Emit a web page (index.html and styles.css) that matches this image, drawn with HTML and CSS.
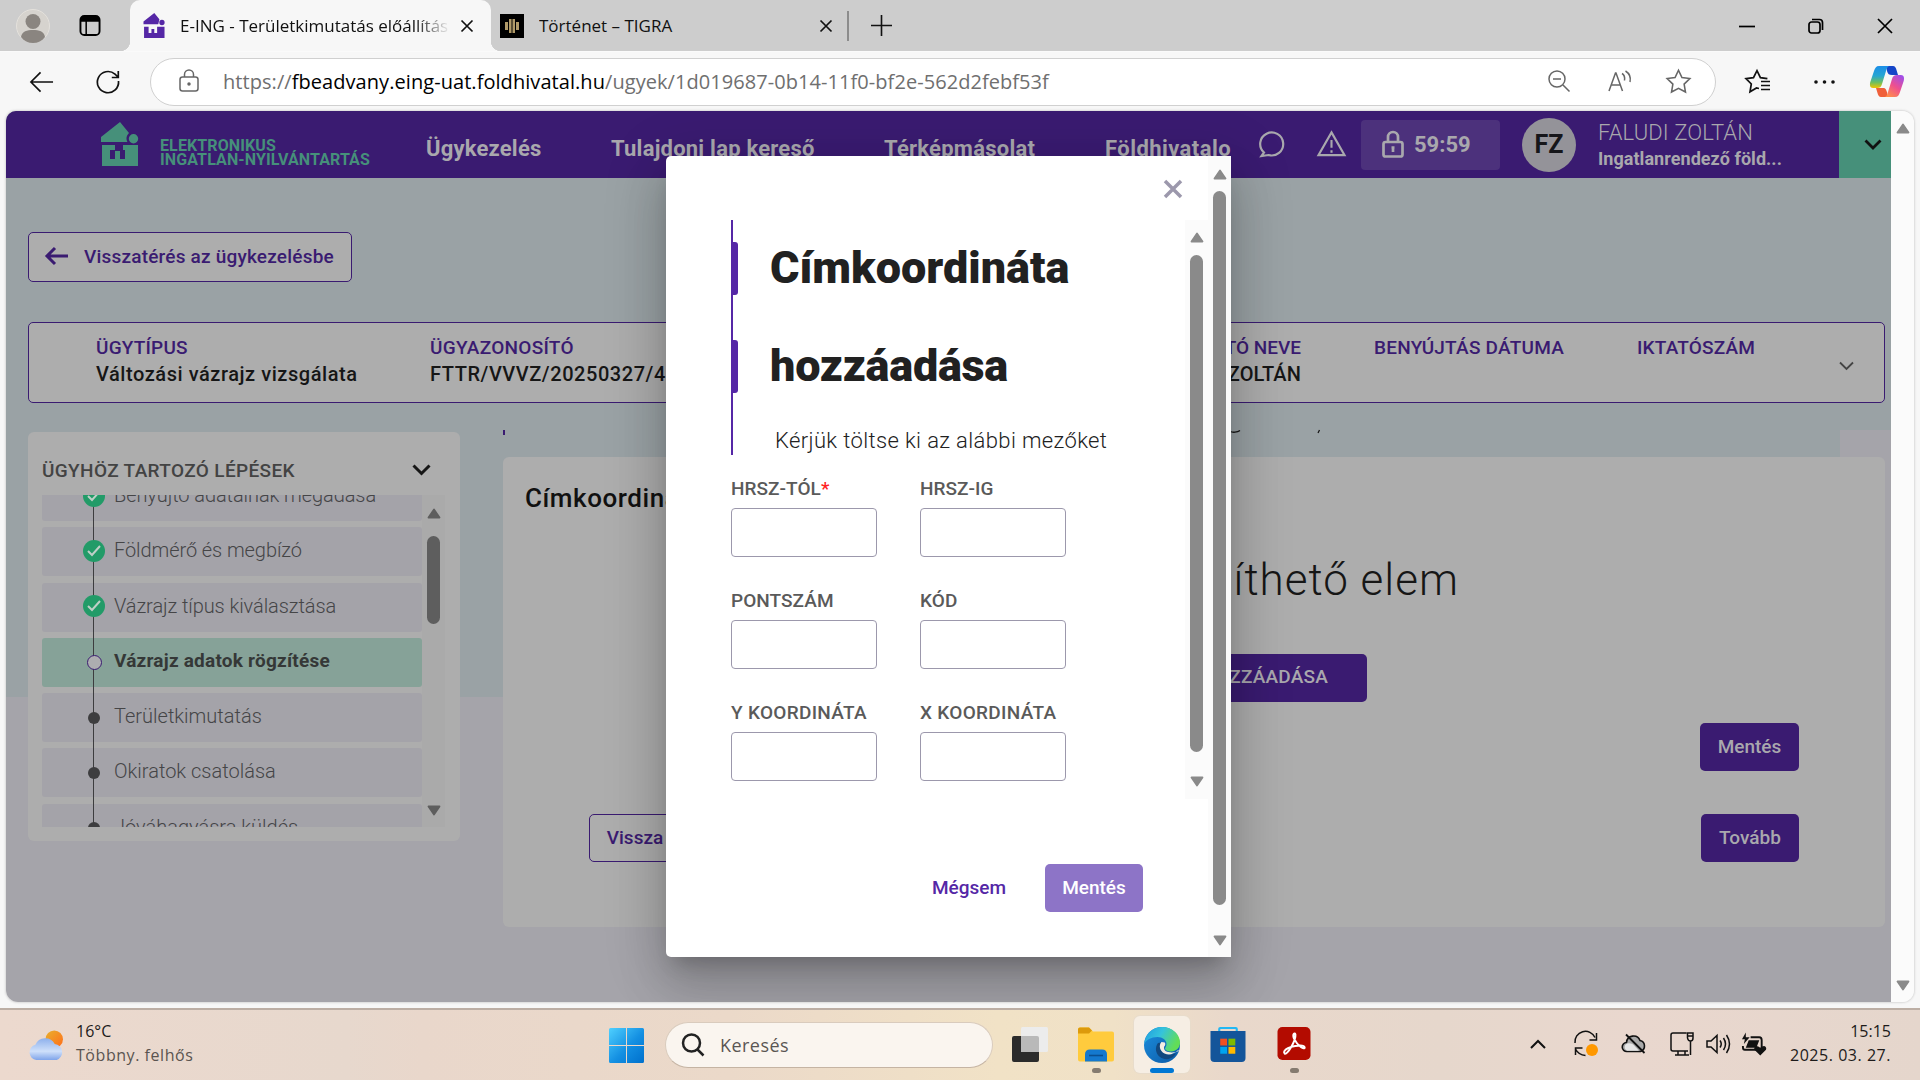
FILE: index.html
```html
<!DOCTYPE html>
<html lang="hu">
<head>
<meta charset="utf-8">
<title>E-ING - Területkimutatás előállítása</title>
<link rel="stylesheet" href="styles.css">
</head>
<body>
<div class="tabs">
  <svg class="profile" viewBox="0 0 34 34"><circle cx="17" cy="17" r="16.500" fill="#d6d3ce" stroke="#e4e1dc"/><circle cx="17" cy="12.500" r="7.500" fill="#8a8580"/><path d="M5 28c1-6 6-7 12-7s11 1 12 7c-3 4-7 6-12 6s-9-2-12-6z" fill="#8a8580"/></svg>
  <svg class="tabmenu" viewBox="0 0 22 22"><rect x="1" y="1" width="20" height="20" rx="4" fill="none" stroke="#000" stroke-width="2"/><path d="M1 5a4 4 0 0 1 4-4h12a4 4 0 0 1 4 4v2H1z"/><path d="M7 6v15" stroke="#000" stroke-width="1.600"/></svg>
  <div class="tab tab-active">
    <svg class="fav" viewBox="0 0 37 44"><path d="M19 0l9 11-2 9H0v-5zM1 24h8v11h5v-7h5v7h5V24h13v20H1zM32.500 12a4.700 4.700 0 1 1 0 9.400 4.700 4.700 0 0 1 0-9.400z" fill="#5527a6"/></svg>
    <span class="tab-title">E-ING - Területkimutatás előállítása</span>
    <svg class="x" viewBox="0 0 12 12"><path d="M.5.500l11 11M11.500.500l-11 11"/></svg>
  </div>
  <div class="tab">
    <svg class="fav" viewBox="0 0 24 24"><path d="M0 0h24v24H0z"/><path d="M5 8h3v8H5zM9 5h2.500v14H9zM12.500 5H15v14h-2.500zM16 8h3v8h-3z" fill="#b09a68"/></svg>
    <span class="tab-title">Történet – TIGRA</span>
    <svg class="x" viewBox="0 0 12 12"><path d="M.5.500l11 11M11.500.500l-11 11"/></svg>
  </div>
  <i class="tabsep"></i>
  <svg class="plus" viewBox="0 0 22 22"><path d="M11 0v22M0 11h22"/></svg>
  <div class="winbtns">
    <svg viewBox="0 0 16 16"><path d="M0 8.500h16"/></svg>
    <svg viewBox="0 0 16 16"><rect x="1" y="4" width="11" height="11" rx="2.500"/><path d="M4 1.500h7.500a3 3 0 0 1 3 3V12"/></svg>
    <svg viewBox="0 0 16 16"><path d="M1 1l14 14M15 1L1 15"/></svg>
  </div>
</div>

<div class="toolbar">
  <svg class="back" viewBox="0 0 26 22"><path d="M25 11H2M12 1L2 11l10 10"/></svg>
  <svg class="reload" viewBox="0 0 24 24"><path d="M22.500 11A10.600 10.600 0 1 1 19 4.200L22 7M22.300 1v6.500h-6.500"/></svg>
  <div class="address">
    <svg class="lock" viewBox="0 0 20 24"><rect x="1" y="8" width="18" height="14" rx="2.500"/><path d="M5.500 8V5.500a4.500 4.500 0 0 1 9 0V8"/><circle cx="10" cy="15" r="1" fill="#555"/></svg>
    <span class="url">https://<b>fbeadvany.eing-uat.foldhivatal.hu</b>/ugyek/1d019687-0b14-11f0-bf2e-562d2febf53f</span>
    <svg class="a1" viewBox="0 0 22 22"><circle cx="9" cy="9" r="8"/><path d="M15 15l6.500 6.500M5 9h8"/></svg>
    <svg class="a2" viewBox="0 0 24 22"><path d="M1 21L7.500 3h.5l6.500 18M3.500 15h9M14 3.500c2.500 1.500 3 4 2.500 7M17.500 1c4 2.500 5.500 6.500 4.500 11"/></svg>
    <svg class="a3" viewBox="0 0 24 24"><path d="M12 1.200l3.300 7 7.600 1-5.500 5.300 1.300 7.600L12 18.500l-6.700 3.600 1.300-7.600L1.100 9.200l7.600-1z"/></svg>
  </div>
  <svg class="favs" viewBox="0 0 26 24"><path d="M14 19l-2.500-.5L5 22.300l1.300-7.800L1 9.200l7.500-1L12 1.200l3.400 7 7 1M16 12h9M16 16h9M16 20h9"/></svg>
  <svg class="dots" viewBox="0 0 21 4"><circle cx="2" cy="2" r="1.800"/><circle cx="10.500" cy="2" r="1.800"/><circle cx="19" cy="2" r="1.800"/></svg>
  <svg class="copilot" viewBox="0 0 34 31">
    <defs>
      <linearGradient id="ca" x1="0" y1="0" x2="0" y2="1"><stop offset="0" stop-color="#1c8ee8"/><stop offset=".45" stop-color="#26a6d2"/><stop offset=".75" stop-color="#6fbf5f"/><stop offset="1" stop-color="#f2c400"/></linearGradient>
      <linearGradient id="cb" x1=".8" y1="0" x2=".2" y2="1"><stop offset="0" stop-color="#a04ee8"/><stop offset=".5" stop-color="#ee4f8f"/><stop offset="1" stop-color="#ff8f4a"/></linearGradient>
    </defs>
    <path d="M16 0h7c2 0 3 2 3.500 4l1.500 5h-6c-3 0-4-1-5-4z" fill="#1545c8"/>
    <path d="M18 31h-7c-2 0-3-2-3.500-4L6 22h7c3 0 3 2 4 4z" fill="#f0603a"/>
    <path d="M9 0h10c-2 1-2.500 3-3 5l-4 13c-1 3-2 4-5 4H3c-3 0-3.500-3-2.700-6L4 5c1-3 2-5 5-5z" fill="url(#ca)"/>
    <path d="M25 31H15c2-1 2.500-3 3-5l4-13c1-3 2-4 5-4h4c3 0 3.500 3 2.700 6L30 26c-1 3-2 5-5 5z" fill="url(#cb)"/>
  </svg>
</div>

<div class="frame">
 <div class="view">
  <div class="app">
    <header class="head">
      <svg class="logo" viewBox="0 0 37 44"><path d="M19 0l9 11c-3 3-3 6-1.500 9H0v-5zM1 23h13v5H9v9h5v-8h5v8h5v-9h-2v-5h15v21H1zM32.500 12a4.700 4.700 0 1 1 0 9.400 4.700 4.700 0 0 1 0-9.400z" fill="#46907a"/></svg>
      <div class="brand"><span class="b1">ELEKTRONIKUS</span><span class="b2">INGATLAN-NYILVÁNTARTÁS</span></div>
      <nav class="nav"><a class="n1">Ügykezelés</a><a class="n2">Tulajdoni lap kereső</a><a class="n3">Térképmásolat</a><a class="n4">Földhivatalo</a></nav>
      <svg class="chat" viewBox="0 0 28 28"><path d="M5 22.500A11.500 11.500 0 1 1 9.500 25L2.500 26z"/></svg>
      <svg class="warn" viewBox="0 0 30 27"><path d="M15 2L28.500 25.500h-27z"/><path d="M15 10v8M15 20.500v2.500"/></svg>
      <div class="timer"><svg viewBox="0 0 22 28"><path d="M6 12V7a5 5 0 0 1 10 0v5"/><rect x="1.500" y="12" width="19" height="14.500" rx="2"/><path d="M11 17v5M9.500 17.500h3"/></svg><span>59:59</span></div>
      <div class="avatar">FZ</div>
      <div class="user"><span class="u1">FALUDI ZOLTÁN</span><span class="u2">Ingatlanrendező föld...</span></div>
      <div class="drop"><svg viewBox="0 0 18 11"><path d="M1.500 1.500L9 9l7.500-7.500"/></svg></div>
    </header>
    <main class="content">
      <a class="return"><svg viewBox="0 0 24 18"><path d="M23 9H2.500M10 1L2 9l8 8"/></svg>Visszatérés az ügykezelésbe</a>
      <section class="case">
        <div class="c1"><h4>ÜGYTÍPUS</h4><p>Változási vázrajz vizsgálata</p></div>
        <div class="c2"><h4>ÜGYAZONOSÍTÓ</h4><p>FTTR/VVVZ/20250327/4</p></div>
        <div class="c3"><h4>BENYÚJTÓ NEVE</h4><p>FALUDI ZOLTÁN</p></div>
        <div class="c4"><h4>BENYÚJTÁS DÁTUMA</h4></div>
        <div class="c5"><h4>IKTATÓSZÁM</h4></div>
        <svg viewBox="0 0 15 10"><path d="M1 1.500L7.500 8 14 1.500"/></svg>
      </section>
      <div class="cols">
        <aside class="steps">
          <div class="steps-head"><span>ÜGYHÖZ TARTOZÓ LÉPÉSEK</span><svg viewBox="0 0 19 12"><path d="M1.500 1.500l8 8 8-8"/></svg></div>
          <div class="steps-body">
            <ul>
              <li><svg viewBox="0 0 22 22"><circle cx="11" cy="11" r="11"/><path d="M5 11l4 4 8-9"/></svg>Benyújtó adatainak megadása</li>
              <li><svg viewBox="0 0 22 22"><circle cx="11" cy="11" r="11"/><path d="M5 11l4 4 8-9"/></svg>Földmérő és megbízó</li>
              <li><svg viewBox="0 0 22 22"><circle cx="11" cy="11" r="11"/><path d="M5 11l4 4 8-9"/></svg>Vázrajz típus kiválasztása</li>
              <li class="now"><i></i>Vázrajz adatok rögzítése</li>
              <li><i></i>Területkimutatás</li>
              <li><i></i>Okiratok csatolása</li>
              <li><i></i>Jóváhagyásra küldés</li>
            </ul>
            <div class="bar bar-steps"><svg class="tri" viewBox="0 0 14 11"><path d="M7 1.500L12.500 9.500h-11z"/></svg><b></b><svg class="tri dn" viewBox="0 0 14 11"><path d="M7 1.500L12.500 9.500h-11z"/></svg></div>
          </div>
        </aside>
        <div class="maincol">
          <div class="cut"><i></i><svg class="g" viewBox="0 0 12 3"><path d="M0 1.200q2 1.300 5 1t5-1.700"/></svg><svg class="y" viewBox="0 0 3 3"><path d="M2.500 0L1 3"/></svg></div>
          <section class="panel">
            <h3>Címkoordináták</h3>
            <p class="empty">Nincs megjeleníthető elem</p>
            <div class="rowadd"><a class="btn add">HOZZÁADÁSA</a></div>
            <div class="rowsave"><a class="btn save">Mentés</a></div>
            <div class="rownav"><a class="btn prev">Vissza</a><a class="btn next">Tovább</a></div>
          </section>
        </div>
      </div>
    </main>
  </div>
  <div class="bar bar-page"><svg class="tri" viewBox="0 0 14 11"><path d="M7 1.500L12.500 9.500h-11z"/></svg><svg class="tri dn" viewBox="0 0 14 11"><path d="M7 1.500L12.500 9.500h-11z"/></svg></div>

  <div class="modal" role="dialog">
    <div class="modal-main">
      <div class="modal-top"><svg viewBox="0 0 20 20"><path d="M2 2l16 16M18 2L2 18"/></svg></div>
      <div class="modal-scroll">
        <form class="form">
          <div class="title">
            <h1><span class="t1">Címkoordináta</span><span class="t2">hozzáadása</span></h1>
            <p>Kérjük töltse ki az alábbi mezőket</p>
          </div>
          <div class="fields">
            <label><span>HRSZ-TÓL<em>*</em></span><input></label>
            <label><span>HRSZ-IG</span><input></label>
            <label><span>PONTSZÁM</span><input></label>
            <label><span>KÓD</span><input></label>
            <label><span class="w">Y KOORDINÁTA</span><input></label>
            <label><span class="w">X KOORDINÁTA</span><input></label>
          </div>
        </form>
        <div class="bar bar-form"><svg class="tri" viewBox="0 0 14 11"><path d="M7 1.500L12.500 9.500h-11z"/></svg><b></b><svg class="tri dn" viewBox="0 0 14 11"><path d="M7 1.500L12.500 9.500h-11z"/></svg></div>
      </div>
      <div class="modal-foot"><a class="cancel">Mégsem</a><a class="btn submit">Mentés</a></div>
    </div>
    <div class="bar bar-modal"><svg class="tri" viewBox="0 0 14 11"><path d="M7 1.500L12.500 9.500h-11z"/></svg><b></b><svg class="tri dn" viewBox="0 0 14 11"><path d="M7 1.500L12.500 9.500h-11z"/></svg></div>
  </div>
 </div>
</div>

<footer class="taskbar">
  <svg class="weather" viewBox="0 0 37 32"><defs><linearGradient id="su" x1="0" y1="0" x2="1" y2="1"><stop offset="0" stop-color="#e9b02c"/><stop offset="1" stop-color="#ff6d1b"/></linearGradient><linearGradient id="cl" x1="0" y1="0" x2="0" y2="1"><stop offset="0" stop-color="#8db0ec"/><stop offset=".6" stop-color="#cfe0fa"/><stop offset="1" stop-color="#7fa4ea"/></linearGradient></defs><circle cx="26.500" cy="9.500" r="9" fill="url(#su)"/><path d="M8 31a8 8 0 0 1-1-15.700A11 11 0 0 1 27 14.500 8.500 8.500 0 0 1 29 31z" fill="url(#cl)"/></svg>
  <div class="wtext"><span>16°C</span><span class="w2">Többny. felhős</span></div>
  <svg class="start" viewBox="0 0 35 35"><defs><linearGradient id="wi" x1="0" y1="0" x2="1" y2="1"><stop offset="0" stop-color="#4fd0ff"/><stop offset=".55" stop-color="#138fe2"/><stop offset="1" stop-color="#0070cc"/></linearGradient></defs><path d="M1.500 0H17v17H0V1.500A1.500 1.500 0 0 1 1.500 0zM18 0h15.500A1.500 1.500 0 0 1 35 1.500V17H18zM0 18h17v17H1.500A1.500 1.500 0 0 1 0 33.500zM18 18h17v15.500a1.500 1.500 0 0 1-1.500 1.500H18z" fill="url(#wi)"/></svg>
  <div class="search"><svg viewBox="0 0 24 24"><circle cx="10.500" cy="10" r="8.500"/><path d="M16.500 16.500l6 6"/></svg><span>Keresés</span></div>
  <svg class="taskview" viewBox="0 0 36 35"><path d="M0 11q0-2 2-2h8v16h17v8q0 2-2 2H2q-2 0-2-2z" fill="#2b2b2b"/><rect x="9" y="0" width="27" height="25" rx="1.500" fill="#ececec"/><path d="M9 9h16q2 0 2 2v14H9z" fill="#b9b9b9"/></svg>
  <div class="pin run">
    <svg viewBox="0 0 36 34"><path d="M0 2q0-2 2-2h9l4 4h19q2 0 2 2v26q0 2-2 2H2q-2 0-2-2z" fill="#ffcb3d"/><path d="M0 2q0-2 2-2h9l3 3-3 3H0z" fill="#dc9a0b"/><path d="M7 34v-7q0-5 5-5h12q5 0 5 5v7z" fill="#1479cf"/><path d="M11 28h14" stroke="#0a4f91" stroke-width="1.600"/></svg><i></i>
  </div>
  <div class="pin edge">
    <svg viewBox="0 0 36 36"><defs><linearGradient id="e1" x1="0" y1="0" x2="1" y2=".4"><stop offset="0" stop-color="#1e9be0"/><stop offset=".5" stop-color="#35c3dc"/><stop offset="1" stop-color="#62dd57"/></linearGradient><linearGradient id="e2" x1="0" y1="0" x2="1" y2="1"><stop offset="0" stop-color="#1c8fe0"/><stop offset="1" stop-color="#0c59a4"/></linearGradient></defs><circle cx="18" cy="18" r="18" fill="url(#e2)"/><path d="M.3 17C1 7 8.500 0 18 0c10.500 0 18 7.500 18 15.500 0 5.500-4 9-9 9-4 0-6-1.500-6-3 0-1 1.500-1.500 1.500-4.500 0-4-4-7-9-7C7 10 2 13 .3 17z" fill="url(#e1)"/><path d="M14 16c-3 4-3 10 2 14 4 3 10 3 14-1 2-2 2-3 1-2.500-6 2.500-15 0-15-7 0-1.500.5-3 1-4z" fill="#12487f"/><path d="M17.500 15c-3 3-2 9 3 11.500 5 2 9 .5 13-3l2.500 0C32 26 19 27 20 20c.5-1 2-2 .8-4.500z" fill="#f5ede3"/></svg><i></i>
  </div>
  <div class="pin"><svg viewBox="0 0 36 36"><path d="M9 6V2q0-1 1-1h16q1 0 1 1v4" fill="none" stroke="#22b8f4" stroke-width="2.200"/><path d="M0 4h36v28q0 4-4 4H4q-4 0-4-4z" fill="#14559a"/><path d="M10 12h7v7h-7z" fill="#f25022"/><path d="M18.500 12h7v7h-7z" fill="#7fba00"/><path d="M10 20.500h7v7h-7z" fill="#00a4ef"/><path d="M18.500 20.500h7v7h-7z" fill="#ffb900"/></svg></div>
  <div class="pin run acro"><svg viewBox="0 0 34 34"><rect width="34" height="34" rx="5" fill="#b30b00"/><path d="M7 25c3-5 20-8 21-4 0 3-7-1-11-9-2-5 1-7 1.500-4C19 14 10 29 7.500 27.500 7 27 6.500 26 7 25z" fill="none" stroke="#fff" stroke-width="2"/></svg><i></i></div>
  <div class="tray">
    <svg class="s1" viewBox="0 0 16 10"><path d="M1 9l7-7 7 7" stroke-width="2"/></svg>
    <svg class="s2" viewBox="0 0 24 24"><path d="M1 11A10.500 10.500 0 0 1 21 5.500M22.500 1v7h-7M1.500 23v-7h7M1.500 17q3 6 10 6.500"/><circle cx="18" cy="18" r="6" fill="#ff9800" stroke="none"/></svg>
    <svg class="s3" viewBox="0 0 24 20"><path d="M5 17.500a4.500 4.500 0 0 1-.5-9 7 7 0 0 1 13.500-2A5.700 5.700 0 0 1 18.500 17.500z" fill="#a9a9a9" stroke-width="1.600"/><path d="M5 16.800a4 4 0 0 1 0-7.300q5-1 8 3l4 4.300z" fill="#e6e6e6" stroke="none"/><path d="M4 .5L22.500 19" stroke-width="1.800"/></svg>
    <svg class="s4" viewBox="0 0 24 24"><path d="M16.500 1H3Q1 1 1 3v14q0 2 2 2h15M8 19v4M15 19v4M5 23h14M17.500 1h5.500v5q0 3-2.500 3t-3-3zM18 4h5M20.500 9v14"/></svg>
    <svg class="s5" viewBox="0 0 24 20"><path d="M1 7h4l6-5.500v17L5 13H1zM14 6.500q2.500 3.500 0 7M17.500 4q4 6 0 12M20.500 1q6 9 0 18"/></svg>
    <svg class="s6" viewBox="0 0 26 24"><path d="M10 5h9q2.500 0 2.500 3v8q0 2-2 2H4q-2 0-2-3v-1" stroke-width="2"/><path d="M8 8h11l-3 8H5zM5 0L1 7h3l-1 5 6-7H5z" fill="#111" stroke="none"/><path d="M20 24l-6-6q-1-3 2-4 2 0 4 2 2-2 4-2 3 1 2 4z" fill="#111" stroke="none"/></svg>
    <div class="clock"><span class="k1">15:15</span><span class="k2">2025. 03. 27.</span></div>
  </div>
</footer>
</body>
</html>
```
FILE: styles.css
```css
*{box-sizing:border-box;margin:0;padding:0}
body{width:1920px;height:1080px;overflow:hidden;background:#f7f7f7;font-family:Roboto,"Liberation Sans",sans-serif;display:flex;flex-direction:column}
svg{display:block;flex:none;overflow:visible}
a,span,p{white-space:nowrap}
h1,h3,h4{font-weight:500}
ul{list-style:none}

/* browser tabs */
.tabs{height:51px;flex:none;background:#cdcdcd;display:flex;align-items:center;font:400 17px/24px "Open Sans",sans-serif;color:#111}
.profile{width:34px;height:34px;margin-left:16px}
.tabmenu{width:22px;height:21px;margin-left:29px}
.tab{display:flex;align-items:center;width:361px;height:51px;padding-left:9px}
.tab-active{background:#f7f7f7;border-radius:10px 10px 0 0;margin-left:29px;padding-left:13px;position:relative}
.tab-active::before,.tab-active::after{content:"";position:absolute;bottom:0;width:10px;height:10px}
.tab-active::before{left:-10px;background:radial-gradient(circle at 0 0,#cdcdcd 10px,#f7f7f7 10.500px)}
.tab-active::after{right:-10px;background:radial-gradient(circle at 100% 0,#cdcdcd 10px,#f7f7f7 10.500px)}
.fav{width:22px;height:25px}
.tab:not(.tab-active) .fav{width:24px;height:24px}
.tab-title{margin-left:15px;width:269px;overflow:hidden}
.tab-active .tab-title{-webkit-mask-image:linear-gradient(90deg,#000 235px,transparent 270px);mask-image:linear-gradient(90deg,#000 235px,transparent 270px)}
.tab .x{width:12px;height:12px;margin-left:12px}
.tab:not(.tab-active){width:356px}
.x path,.plus path{stroke:#111;stroke-width:1.700;fill:none}
.tabsep{width:2px;height:30px;background:#8c8c8c}
.plus{width:21px;height:21px;margin-left:22px}
.winbtns{margin-left:auto;margin-right:27px;display:flex;gap:53px}
.winbtns svg{width:16px;height:16px;fill:none;stroke:#000;stroke-width:1.700}

/* browser toolbar */
.toolbar{height:60px;flex:none;display:flex;align-items:center;border-top:1px solid #fafafa}
.toolbar svg{fill:none;stroke:#111;stroke-width:1.700}
.back{width:25px;height:22px;margin-left:29px}
.reload{width:24px;height:24px;margin-left:42px}
.address{width:1566px;height:48px;margin-left:30px;border:1px solid #d0d0d0;border-radius:24px;background:#fff;display:flex;align-items:center;padding-left:28px}
.toolbar .address svg{stroke:#666;stroke-width:1.500}
.lock{width:20px;height:24px;margin-top:-2px}
.url{font:400 20px/30px "Open Sans",sans-serif;letter-spacing:.06px;color:#6f6f6f;margin-left:24px;width:1301px}
.url b{font-weight:400;color:#000}
.a1{width:22px;height:22px;margin-left:24px;margin-top:-2px}
.a2{width:24px;height:22px;margin-left:38px;margin-top:-2px}
.a3{width:25px;height:25px;margin-left:34px}
.favs{width:26px;height:25px;margin-left:29px}
.toolbar .dots{width:21px;height:4px;margin-left:43px;fill:#111;stroke:none}
.toolbar .copilot{width:34px;height:31px;margin-left:35px;stroke:none}

/* page viewport */
.frame{height:897px;flex:none;padding:0 6px 6px}
.view{position:relative;width:1908px;height:891px;border-radius:10px 12px 12px 12px;overflow:hidden;display:flex;box-shadow:0 0 2px 1px #d9d9d9}
.app{width:1885px;background:linear-gradient(#a5a4aa,#a5a4aa) 1834px 319px/51px 600px no-repeat,linear-gradient(#9aa2a5 586px,#a5a4aa 586px)}
.bar{position:relative;display:flex;flex-direction:column;align-items:center;background:#fbfbfb}
.tri{width:14px;height:11px;fill:#8a8a8a;stroke:#8a8a8a;stroke-width:1.800;stroke-linejoin:round}
.dn{transform:rotate(180deg);margin-top:auto}
.bar b{display:block;border-radius:7px;background:#8a8a8a}
.bar-page{width:23px;padding:12px 0 11px}

/* application header */
.head{height:67px;background:#3a1b71;display:flex;align-items:center;padding-left:95px;color:#a9a8ad}
.logo{width:37px;height:44px;margin-top:-1px}
.brand{width:210px;margin-left:22px;display:flex;flex-direction:column;color:#46907a;font:700 16px/14px Roboto,sans-serif;margin-top:16px}
.b1,.b2{letter-spacing:.11px}
.nav{width:806px;height:67px;overflow:hidden;margin-left:56px;display:flex;gap:70px;align-items:center;padding-top:8px;font-weight:700;font-size:22px}
.nav a{flex:none}
.n1{width:115px;letter-spacing:.2px}
.n2{width:203px;letter-spacing:.22px}
.n3{width:151px;letter-spacing:.25px}
.n4{letter-spacing:.43px}
.chat{width:28px;height:28px;margin:-2px 0 0 27px;fill:none;stroke:#a9a8ad;stroke-width:2.200}
.warn{width:29px;height:27px;margin:-2px 0 0 30px;fill:none;stroke:#a9a8ad;stroke-width:2.200}
.timer{width:139px;height:50px;margin-left:15px;border-radius:4px;background:#4c317c;display:flex;align-items:center;gap:10px;padding-left:21px;font:700 22px/28px Roboto,sans-serif}
.timer svg{width:22px;height:28px;margin-top:-2px;fill:none;stroke:#a9a8ad;stroke-width:2.700}
.avatar{width:54px;height:54px;margin-left:22px;border-radius:50%;background:#949399;color:#16161a;font:700 25px/54px Roboto,sans-serif;text-align:center}
.user{width:241px;margin-left:22px;display:flex;flex-direction:column}
.u1{font:300 22px/27px Roboto,sans-serif;letter-spacing:.11px}
.u2{font:700 18px/25px Roboto,sans-serif;letter-spacing:.05px}
.drop{width:52px;height:67px;background:#46907a;display:flex;align-items:center;padding-left:25px}
.drop svg{width:18px;height:11px;fill:none;stroke:#111;stroke-width:2.800}

/* content */
.content{padding:54px 0 0 22px}
.return{width:324px;height:50px;border:1.500px solid #3a1b71;border-radius:5px;background:#adadad;color:#3a1b71;display:flex;align-items:center;padding:0 0 2px 16px;font-weight:500;font-size:19px;letter-spacing:.2px}
.return svg{width:24px;height:18px;margin:-1px 15px 0 0;fill:none;stroke:#3a1b71;stroke-width:3}
.case{margin-top:40px;width:1857px;height:81px;border:1.500px solid #3a1b71;border-radius:5px;background:#adadad;display:flex;gap:73px;padding:11px 0 0 67px}
.case h4{font-size:19px;line-height:27px;color:#3a1b71;white-space:nowrap}
.case p{font-weight:500;font-size:20px;line-height:27px;color:#161616}
.case svg{width:15px;height:10px;margin:27px 0 0 11px;fill:none;stroke:#444;stroke-width:1.800}
.c1{width:261px}
.c1 h4{letter-spacing:.2px}
.c1 p{letter-spacing:.55px}
.c2{width:570px}
.c2 h4{letter-spacing:.28px}
.c2 p{letter-spacing:.55px}
.c3{width:228px;text-align:right}
.c3 p{letter-spacing:.1px}
.c4{width:190px}
.c4 h4{letter-spacing:.24px}
.c5{width:118px}
.c5 h4{letter-spacing:.18px}
.cols{display:flex;align-items:flex-start}

/* step list */
.steps{width:432px;height:409px;margin-top:29px;border-radius:6px;background:#adadad;padding:0 15px 0 14px}
.steps-head{height:63px;padding:13px 14px 0 0;display:flex;align-items:center;justify-content:space-between;color:#434343;font-weight:500;font-size:19px;letter-spacing:.36px}
.steps-head svg{width:19px;height:12px;fill:none;stroke:#161616;stroke-width:3}
.steps-body{width:403px;height:332px;overflow:hidden;display:flex}
.steps ul{position:relative;width:380px;margin-top:-23px;display:flex;flex-direction:column;gap:6.300px}
.steps ul::before{content:"";position:absolute;left:51px;top:23px;width:1px;height:360px;background:#3d3d3f;z-index:1}
.steps li{height:49px;flex:none;display:flex;align-items:center;border-radius:3px;background:#a4a3a9;color:#454547;font-weight:300;font-size:20px;line-height:46px;padding-bottom:3px;padding-left:41px;white-space:nowrap}
.steps li:nth-child(-n+3){letter-spacing:-.08px}
.steps li svg{position:relative;z-index:2;width:22px;height:22px;margin:1px 9px 0 0;fill:#229b68}
.steps li path{fill:none;stroke:#bfcfc7;stroke-width:2}
.steps li i{position:relative;z-index:2;width:12px;height:12px;border-radius:50%;background:#3d3d3f;margin:3px 14px 0 5px}
.steps li.now{background:#86a298;color:#353837;font-weight:700;font-size:19px;letter-spacing:.22px;padding-bottom:2px}
.steps li.now i{width:15px;height:15px;background:#adadb0;border:1.500px solid #3a1b71;margin:2px 12px 0 4px}
.bar-steps{width:23px;background:#aaa;padding:13px 0 11px}
.bar-steps .tri{fill:#5e5e5e;stroke:#5e5e5e}
.bar-steps b{width:13px;height:88px;margin-top:17px;background:#5e5e5e}

/* main panel */
.maincol{margin:27px 0 0 43px;width:1382px}
.cut{height:27px;display:flex}
.cut i{width:2px;height:5px;background:#3a1b71}
.cut svg{fill:none;stroke:#161616;stroke-width:1.300}
.cut .g{width:12px;height:3px;margin-left:725px}
.cut .y{width:3px;height:3px;margin-left:75px}
.panel{height:470px;border-radius:6px;background:#adadad}
.panel h3{height:81px;padding:23px 0 0 22px;font-size:26px;line-height:36px;letter-spacing:.55px;color:#111}
.empty{padding-right:426px;text-align:right;font-weight:300;font-size:44px;line-height:84px;letter-spacing:1px;color:#161616}
.btn{display:flex;align-items:center;justify-content:center;border-radius:5px;height:48px;background:#3a1b71;color:#a9a8ad;font-weight:500;font-size:19px;padding-bottom:2px}
.rowadd{height:48px;margin-top:32px;padding-right:518px;display:flex;justify-content:flex-end}
.add{width:347px;justify-content:flex-end;padding:0 39px 3px 0;letter-spacing:.2px}
.rowsave{margin-top:21px;padding-right:86px;display:flex;justify-content:flex-end}
.save{width:99px}
.rownav{margin-top:43px;padding:0 86px;display:flex;justify-content:space-between}
.prev{width:92px;border:1.500px solid #3a1b71;background:none;color:#3a1b71}
.next{width:98px}

/* dialog */
.modal{position:absolute;left:660px;top:45px;width:565px;height:801px;display:flex;background:#fff;border-radius:5px 0 0 5px;box-shadow:0 14px 19px -9px rgba(0,0,0,.2),0 30px 48px 4px rgba(0,0,0,.14),0 11px 58px 10px rgba(0,0,0,.12)}
.modal-main{width:542px}
.modal-top{height:64px;display:flex;justify-content:flex-end;padding:23px 25px 0 0}
.modal-top svg{width:20px;height:20px;fill:none;stroke:#9c98ac;stroke-width:3.500}
.modal-scroll{height:579px;padding-left:65px;display:flex;justify-content:space-between}
.title{border-left:2px solid #5527a6;height:235px}
.title h1{color:#212121;font-weight:900;font-size:45px;line-height:95px}
.title h1 span{position:relative;display:block;height:98px;padding-left:37px}
.title h1 span::before{content:"";position:absolute;left:0;top:22px;width:5px;height:53px;background:#5527a6;border-radius:0 3px 3px 0}
.t2{letter-spacing:-.27px}
.title p{padding:10px 0 0 42px;font-weight:300;font-size:22px;line-height:29px;letter-spacing:.37px;color:#212121}
.fields{margin-top:14px;display:grid;grid-template-columns:146px 146px;column-gap:43px;row-gap:24px}
.fields label{display:flex;flex-direction:column}
.fields span{font-weight:500;font-size:19px;line-height:39px;height:39px;letter-spacing:.05px;color:#5a5a5a}
.fields .w{letter-spacing:.3px}
.fields em{font-style:normal;color:#f22}
.fields input{width:146px;height:49px;border:1.500px solid #9c98ac;border-radius:4px;background:#fff}
.bar-form{width:23px;padding:12px 0 12px}
.bar-form b{width:13px;height:497px;margin-top:12px}
.bar-modal{width:23px;padding:13px 0 11px}
.bar-modal b{width:13px;height:714px;margin-top:11px}
.modal-foot{margin-top:65px;padding-right:65px;display:flex;justify-content:flex-end;align-items:center;gap:39px}
.cancel{color:#5527a6;font-weight:500;font-size:19px;padding-bottom:2px}
.submit{width:98px;background:#8d74c7;color:#fff}

/* taskbar */
.taskbar{height:72px;flex:none;border-top:2px solid #bcaea4;background:linear-gradient(90deg,#ecd9ce 0,#e7d8cd 18%,#e9d7cb 22%,#ebd9c9 38%,#f1e2c6 52%,#f0e1c7 58%,#e9d8cb 64%,#e6d7cc 75%,#e9d7ce 85%,#e5d6cc 100%);display:flex;align-items:center;font:400 16px/24px "Open Sans",sans-serif;color:#1d1b1a}
.weather{width:37px;height:31px;margin-left:28px}
.wtext{width:119px;margin-left:11px;display:flex;flex-direction:column}
.wtext,.clock{margin-top:-4px}
.w2{color:#5a5450;letter-spacing:.55px}
.start{width:35px;height:35px;margin-left:414px}
.search{width:328px;height:46px;margin-left:21px;margin-top:-1px;border-radius:23px;background:#faf5ef;border:1px solid #d9cbbd;border-bottom-color:#c5b4a3;display:flex;align-items:center;padding-left:15px;font-size:18px;color:#5a5653;letter-spacing:.45px;gap:15px}
.search svg{width:24px;height:24px;fill:none;stroke:#222;stroke-width:2.500}
.taskview{width:36px;height:35px;margin-left:19px;margin-top:-2px}
.pin{position:relative;width:56px;height:57px;display:flex;align-items:center;justify-content:center;margin-left:10px;margin-top:-1px;border-radius:6px}
.taskview + .pin{margin-left:20px}
.pin svg{width:36px;height:35px}
.pin.edge{background:#f6eee4;box-shadow:0 0 0 1px #e8dccb}
.pin.edge svg{width:36px;height:36px}
.pin.acro svg{width:34px;height:33px;margin-top:-3px}
.pin i{position:absolute;bottom:0;left:24px;width:9px;height:5px;border-radius:3px;background:#857b70}
.pin.edge i{left:16px;width:24px;background:#0078d4}
.tray{margin-left:auto;display:flex;align-items:center;padding-right:29px}
.tray svg{fill:none;stroke:#111;stroke-width:1.500;margin-top:-2px}
.s1{width:16px;height:10px}
.s2{width:24px;height:24px;margin-left:28px}
.s3{width:24px;height:20px;margin-left:24px}
.s4{width:24px;height:24px;margin-left:24px}
.s5{width:24px;height:20px;margin-left:12px}
.s6{width:25px;height:24px;margin-left:11px}
.clock{width:125px;display:flex;flex-direction:column;align-items:flex-end}
.k2{letter-spacing:.53px}
```
